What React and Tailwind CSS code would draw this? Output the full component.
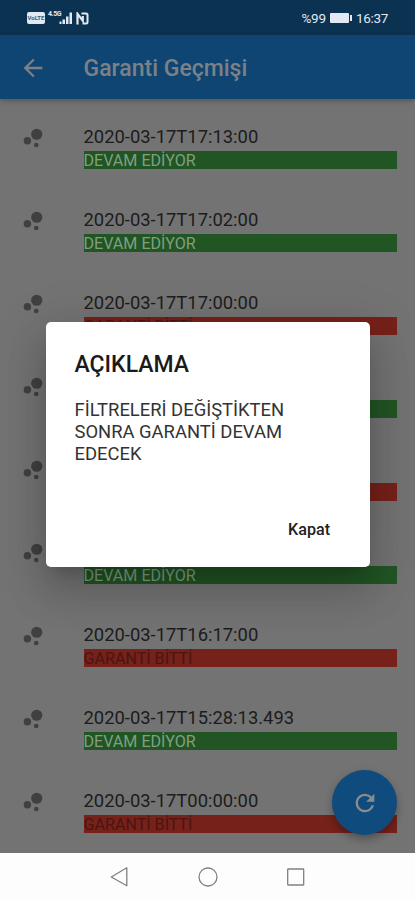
import React, { useState } from 'react';
import { MdArrowBack, MdBubbleChart, MdRefresh } from 'react-icons/md';

const RECORDS = [
    { date: '2020-03-17T17:13:00', active: true },
    { date: '2020-03-17T17:02:00', active: true },
    { date: '2020-03-17T17:00:00', active: false },
    { date: '2020-03-17T16:58:00', active: true },
    { date: '2020-03-17T16:42:00', active: false },
    { date: '2020-03-17T16:30:00', active: true },
    { date: '2020-03-17T16:17:00', active: false },
    { date: '2020-03-17T15:28:13.493', active: true },
    { date: '2020-03-17T00:00:00', active: false },
];

function StatusBar() {
    return (
        <div className="h-[35px] shrink-0 bg-[#0c3251] flex items-center justify-between pl-[27px] pr-[27px] pt-[1px] text-[#e3e9f2]">
            <div className="flex items-center h-[14px]">
                <div className="w-[18px] h-[12px] rounded-[2px] bg-[#e3e9f2] text-[#3c5a76] text-[6px] leading-[12px] font-bold text-center">
                    VoLTE
                </div>
                <div className="ml-[3px] h-[14px] text-[7px] leading-[7px] font-bold tracking-[-0.4px]">4.5G</div>
                <svg className="-ml-[3px]" width="15" height="14" viewBox="0 0 15 14" fill="currentColor">
                    <path d="M1.500 10.500h2V13h-2zM4.500 8.500H7V13H4.500zM8 5.500h2.500V13H8zM11.500 1.500H14V13h-2.500z" />
                </svg>
                <svg className="ml-[3px]" width="13" height="13" viewBox="0 0 13 13" fill="none" stroke="currentColor">
                    <path strokeWidth="2.200" d="M1.500 12.500V1.800L6.800 8.800V4" />
                    <path strokeWidth="2" d="M5.500 1.500H10q1.500 0 1.500 1.500v7q0 1.500-1.500 1.500H6.500" />
                </svg>
            </div>
            <div className="flex items-center text-[13.500px] leading-[14px]">
                <span className="tracking-[-0.2px]">%99</span>
                <span className="ml-[4px] w-[19px] h-[10px] rounded-[1px] bg-[#e3e9f2]" />
                <span className="ml-[1px] w-[2px] h-[6px] bg-[#e3e9f2]" />
                <span className="ml-[4px] tracking-[-0.3px]">16:37</span>
            </div>
        </div>
    );
}

function Row({ date, active }) {
    return (
        <li className="h-[83px] flex pl-[18.500px] pr-[18px]">
            <MdBubbleChart className="w-[28px] h-[28px] mt-[17px] shrink-0 text-[#404040]" />
            <div className="ml-[37px] flex-1 pt-[18px]">
                <p className="h-[26px] leading-[23px] text-[18.400px] text-[#1c1c1c]">{date}</p>
                <p
                    className={`h-[18px] leading-[19px] text-[16.100px] ${
                        active ? 'bg-[#215524] text-[#7f9f80]' : 'bg-[#76211a] text-[#4b1511]'
                    }`}
                >
                    {active ? 'DEVAM EDİYOR' : 'GARANTİ BİTTİ'}
                </p>
            </div>
        </li>
    );
}

function NoteDialog({ onClose }) {
    return (
        <div className="absolute left-[46px] top-[322px] w-[324px] h-[245px] rounded-[5px] bg-white flex flex-col pl-[28.500px] pr-[20px] pt-[29px] pb-[19px] shadow-[0_12px_17px_-8px_rgba(0,0,0,0.2),0_26px_42px_3px_rgba(0,0,0,0.12),0_10px_50px_9px_rgba(0,0,0,0.1)]">
            <h2 className="text-[23px] leading-[28px] font-medium text-[#1a1a1a]">AÇIKLAMA</h2>
            <p className="mt-[20px] w-[230px] text-[18.400px] leading-[22px] text-[#333]">
                FİLTRELERİ DEĞİŞTİKTEN SONRA GARANTİ DEVAM EDECEK
            </p>
            <button onClick={onClose} className="mt-auto self-end px-[20px] h-[36px] text-[16.100px] font-medium text-[#222]">
                Kapat
            </button>
        </div>
    );
}

function NavBar() {
    return (
        <div className="h-[47px] shrink-0 bg-[#fdfdfd] flex items-center justify-center gap-[66px] text-[#808080]">
            <svg width="22" height="22" viewBox="0 0 22 22" fill="none" stroke="currentColor" strokeWidth="1.300">
                <path d="M17.800 1.800v18L2.300 11z" strokeLinejoin="round" />
            </svg>
            <svg width="22" height="22" viewBox="0 0 22 22" fill="none" stroke="currentColor" strokeWidth="1.300">
                <circle cx="11" cy="11" r="9" />
            </svg>
            <svg width="22" height="22" viewBox="0 0 22 22" fill="none" stroke="currentColor" strokeWidth="1.300">
                <rect x="2.700" y="3" width="16" height="16" rx="0.500" />
            </svg>
        </div>
    );
}

export default function App() {
    const [open, setOpen] = useState(true);

    return (
        <div className="relative w-[415px] h-[900px] overflow-hidden flex flex-col bg-[#737373] font-[Roboto,sans-serif]">
            <StatusBar />
            <header className="relative h-[64px] shrink-0 bg-[#0f4572] flex items-center pl-[19px] pt-[1px] text-[#7c8187] shadow-[0_2px_5px_rgba(0,0,0,0.25)]">
                <MdArrowBack className="w-[28px] h-[28px]" />
                <h1 className="ml-[36.500px] pt-[3px] text-[23px] leading-[28px] font-medium">Garanti Geçmişi</h1>
            </header>
            <ul className="flex-1 min-h-0 overflow-hidden pt-[8px]">
                {RECORDS.map((r) => (
                    <Row key={r.date} {...r} />
                ))}
            </ul>
            <NavBar />
            <button className="absolute left-[332px] top-[770px] w-[65px] h-[65px] rounded-full bg-[#0f4b7c] text-[#8a8d90] flex items-center justify-center shadow-[0_4px_9px_rgba(0,0,0,0.3)]">
                <MdRefresh className="w-[28px] h-[28px]" />
            </button>
            {open && <NoteDialog onClose={() => setOpen(false)} />}
        </div>
    );
}
